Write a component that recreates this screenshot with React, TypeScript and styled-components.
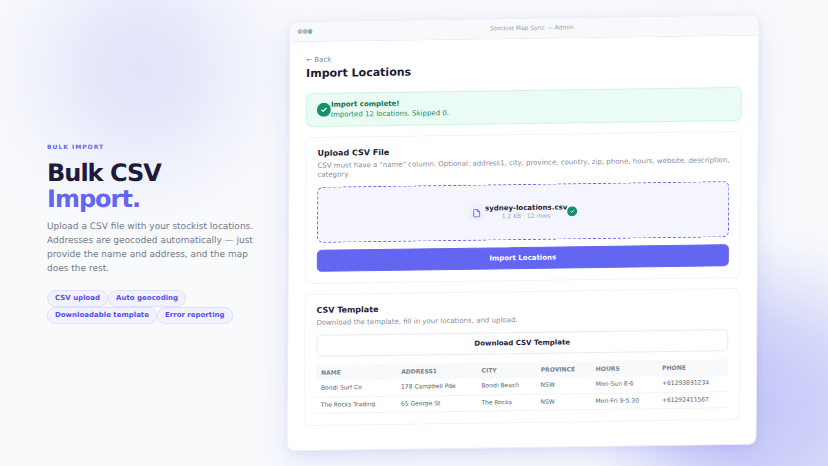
import React from "react";
import styled, { createGlobalStyle } from "styled-components";

const GlobalStyle = createGlobalStyle`
  * { box-sizing: border-box; }
  body {
    margin: 0;
    font-family: "DejaVu Sans", sans-serif;
    background: #f8fafc;
    text-rendering: geometricPrecision;
  }
  h1, h2, h3, p, ul { margin: 0; padding: 0; }
`;

const Page = styled.main`
  min-height: 100vh;
  display: flex;
  align-items: center;
  gap: 34px;
  padding: 17px 70px 17px 47px;
  overflow: hidden;
  background:
    radial-gradient(circle at 141px 70px, rgba(99, 102, 241, 0.14) 0, rgba(99, 102, 241, 0.13) 40px, rgba(99, 102, 241, 0.09) 75px, rgba(99, 102, 241, 0.05) 105px, rgba(99, 102, 241, 0.01) 145px, rgba(99, 102, 241, 0) 175px),
    radial-gradient(circle at calc(100% - 63px) calc(100% - 56px), rgba(99, 102, 241, 0.32) 0, rgba(99, 102, 241, 0.29) 50px, rgba(99, 102, 241, 0.23) 87px, rgba(99, 102, 241, 0.1) 135px, rgba(99, 102, 241, 0.02) 170px, rgba(99, 102, 241, 0) 195px),
    #f8fafc;
`;

const Intro = styled.section`
  flex: 0 0 207px;
`;

const Eyebrow = styled.p`
  font-size: 6px;
  font-weight: 700;
  line-height: 10px;
  letter-spacing: 1px;
  text-transform: uppercase;
  color: #6366f1;
`;

const Headline = styled.h1`
  margin-top: 7px;
  font-size: 24px;
  font-weight: 700;
  line-height: 26px;
  letter-spacing: -1px;
  color: #1e1b3a;
`;

const Accent = styled.span`
  display: block;
  color: #6366f1;
`;

const Lead = styled.p`
  margin-top: 8px;
  font-size: 9px;
  line-height: 14px;
  color: #747a89;
`;

const Chips = styled.ul`
  display: flex;
  flex-wrap: wrap;
  margin-top: 14px;
  list-style: none;
`;

const Chip = styled.li`
  padding: 0 7px;
  border: 1px solid #dfe0fc;
  border-radius: 9px;
  background: #f1f2fe;
  font-size: 7px;
  font-weight: 700;
  line-height: 15px;
  color: #5650e8;
`;

const Window = styled.section`
  flex: 1;
  min-width: 0;
  border: 1px solid #eceefa;
  border-radius: 8px;
  background: #fff;
  box-shadow: 0 10px 30px rgba(99, 102, 241, 0.15), 0 2px 6px rgba(30, 27, 75, 0.06);
  transform: skewY(-0.8deg) skewX(-0.4deg);
`;

const TitleBar = styled.header`
  display: flex;
  align-items: center;
  height: 20px;
  padding: 0 7px;
  border-bottom: 1px solid #e9ebf5;
  border-radius: 8px 8px 0 0;
  background: #f8f9fc;
`;

const Dot = styled.span<{ $color: string }>`
  width: 5px;
  height: 5px;
  border-radius: 50%;
  background: ${(p) => p.$color};
`;

const WindowTitle = styled.span`
  flex: 1;
  text-align: center;
  font-size: 6px;
  color: #9a9fab;
`;

const Content = styled.div`
  padding: 13px 16px 24px;
`;

const BackLink = styled.a`
  display: block;
  font-size: 7px;
  line-height: 10px;
  color: #7b8190;
  text-decoration: none;
`;

const Title = styled.h2`
  margin-top: 1px;
  font-size: 11px;
  line-height: 16px;
  color: #1e1b3a;
`;

const Notice = styled.div`
  display: flex;
  align-items: center;
  height: 34px;
  margin-top: 11px;
  padding: 0 10px;
  border: 1px solid #cdf5e2;
  border-radius: 6px;
  background: #eafcf4;
  font-size: 7px;
  line-height: 10px;
  color: #1a8a66;
`;

const NoticeTitle = styled.strong`
  display: block;
  color: #0b7350;
`;

const Card = styled.section`
  margin-top: 10px;
  padding: 11px;
  border: 1px solid #f3f4fb;
  border-radius: 7px;
`;

const CardTitle = styled.h3`
  font-size: 8px;
  line-height: 10px;
  color: #1e1b3a;
`;

const CardText = styled.p`
  margin: 3px -8px 0 0;
  font-size: 7px;
  line-height: 9px;
  color: #868c99;
`;

const DropZone = styled.div`
  display: flex;
  align-items: center;
  justify-content: center;
  height: 56px;
  margin-top: 7px;
  border: 1px dashed #6366f1;
  border-radius: 6px;
  background: #f5f5ff;
`;

const FileBadge = styled.span`
  display: flex;
  align-items: center;
  justify-content: center;
  width: 16px;
  height: 16px;
  border-radius: 4px;
  background: #efeffe;
`;

const FileInfo = styled.div`
  text-align: center;
  font-size: 6px;
  line-height: 8px;
  color: #a3a6b5;
`;

const FileName = styled.strong`
  display: block;
  font-size: 7px;
  line-height: 9px;
  color: #1e1b3a;
`;

const Button = styled.button<{ $primary?: boolean }>`
  display: block;
  width: 100%;
  height: 22px;
  margin-top: 7px;
  padding: 0;
  border: 1px solid ${(p) => (p.$primary ? "#6366f1" : "#eaebf8")};
  border-radius: 5px;
  background: ${(p) => (p.$primary ? "#6366f1" : "#fff")};
  font-family: inherit;
  font-size: 7px;
  font-weight: 700;
  color: ${(p) => (p.$primary ? "#fff" : "#1e1b3a")};
`;

const Table = styled.table`
  width: 100%;
  margin-top: 8px;
  border-collapse: collapse;
  text-align: left;
  font-size: 6px;
  color: #565d6d;
`;

const HeadCell = styled.th`
  height: 16px;
  padding: 0 5px;
  background: #f8f9fb;
  font-weight: 700;
  text-transform: uppercase;
  color: #7b8190;
`;

const Cell = styled.td`
  height: 16px;
  padding: 0 5px;
  border-bottom: 1px solid #f3f4f9;
`;

const Check = ({ size }: { size: number }) => (
  <svg width={size} height={size} viewBox="0 0 14 14" aria-hidden="true">
    <circle cx="7" cy="7" r="7" fill="#159068" />
    <path d="M4.8 7.2 6.3 8.6l3-3.1" fill="none" stroke="#fff" strokeWidth="1.1" strokeLinecap="round" strokeLinejoin="round" />
  </svg>
);

const FileIcon = () => (
  <svg width="9" height="9" viewBox="0 0 24 24" fill="none" stroke="#6366f1" strokeWidth="2.4" strokeLinejoin="round" aria-hidden="true">
    <path d="M14 2H6a2 2 0 0 0-2 2v16a2 2 0 0 0 2 2h12a2 2 0 0 0 2-2V8z" />
    <path d="M14 2v6h6" />
  </svg>
);

const chips = ["CSV upload", "Auto geocoding", "Downloadable template", "Error reporting"];

const columns = ["Name", "Address1", "City", "Province", "Hours", "Phone"];

const rows = [
  ["Bondi Surf Co", "178 Campbell Pde", "Bondi Beach", "NSW", "Mon-Sun 8-6", "+61293891234"],
  ["The Rocks Trading", "65 George St", "The Rocks", "NSW", "Mon-Fri 9-5:30", "+61292411567"],
];

export default function App() {
  return (
    <>
      <GlobalStyle />
      <Page>
        <Intro>
          <Eyebrow>Bulk import</Eyebrow>
          <Headline>
            Bulk CSV <Accent>Import.</Accent>
          </Headline>
          <Lead>
            Upload a CSV file with your stockist locations. Addresses are geocoded automatically — just provide the
            name and address, and the map does the rest.
          </Lead>
          <Chips>
            {chips.map((chip) => (
              <Chip key={chip}>{chip}</Chip>
            ))}
          </Chips>
        </Intro>
        <Window>
          <TitleBar>
            <Dot $color="#b9bcc2" />
            <Dot $color="#b3b7bd" />
            <Dot $color="#6cbf9f" />
            <WindowTitle>Stockist Map Sync — Admin</WindowTitle>
          </TitleBar>
          <Content>
            <BackLink href="#">← Back</BackLink>
            <Title>Import Locations</Title>
            <Notice role="status">
              <Check size={14} />
              <div>
                <NoticeTitle>Import complete!</NoticeTitle>
                Imported 12 locations. Skipped 0.
              </div>
            </Notice>
            <Card>
              <CardTitle>Upload CSV File</CardTitle>
              <CardText>
                CSV must have a "name" column. Optional: address1, city, province, country, zip, phone, hours,
                website, description, category.
              </CardText>
              <DropZone>
                <FileBadge>
                  <FileIcon />
                </FileBadge>
                <FileInfo>
                  <FileName>sydney-locations.csv</FileName>
                  1.2 KB · 12 rows
                </FileInfo>
                <Check size={10} />
              </DropZone>
              <Button type="button" $primary>
                Import Locations
              </Button>
            </Card>
            <Card>
              <CardTitle>CSV Template</CardTitle>
              <CardText>Download the template, fill in your locations, and upload.</CardText>
              <Button type="button">Download CSV Template</Button>
              <Table>
                <thead>
                  <tr>
                    {columns.map((label) => (
                      <HeadCell key={label} scope="col">
                        {label}
                      </HeadCell>
                    ))}
                  </tr>
                </thead>
                <tbody>
                  {rows.map((row) => (
                    <tr key={row[0]}>
                      {row.map((value, i) => (
                        <Cell key={i}>{value}</Cell>
                      ))}
                    </tr>
                  ))}
                </tbody>
              </Table>
            </Card>
          </Content>
        </Window>
      </Page>
    </>
  );
}
